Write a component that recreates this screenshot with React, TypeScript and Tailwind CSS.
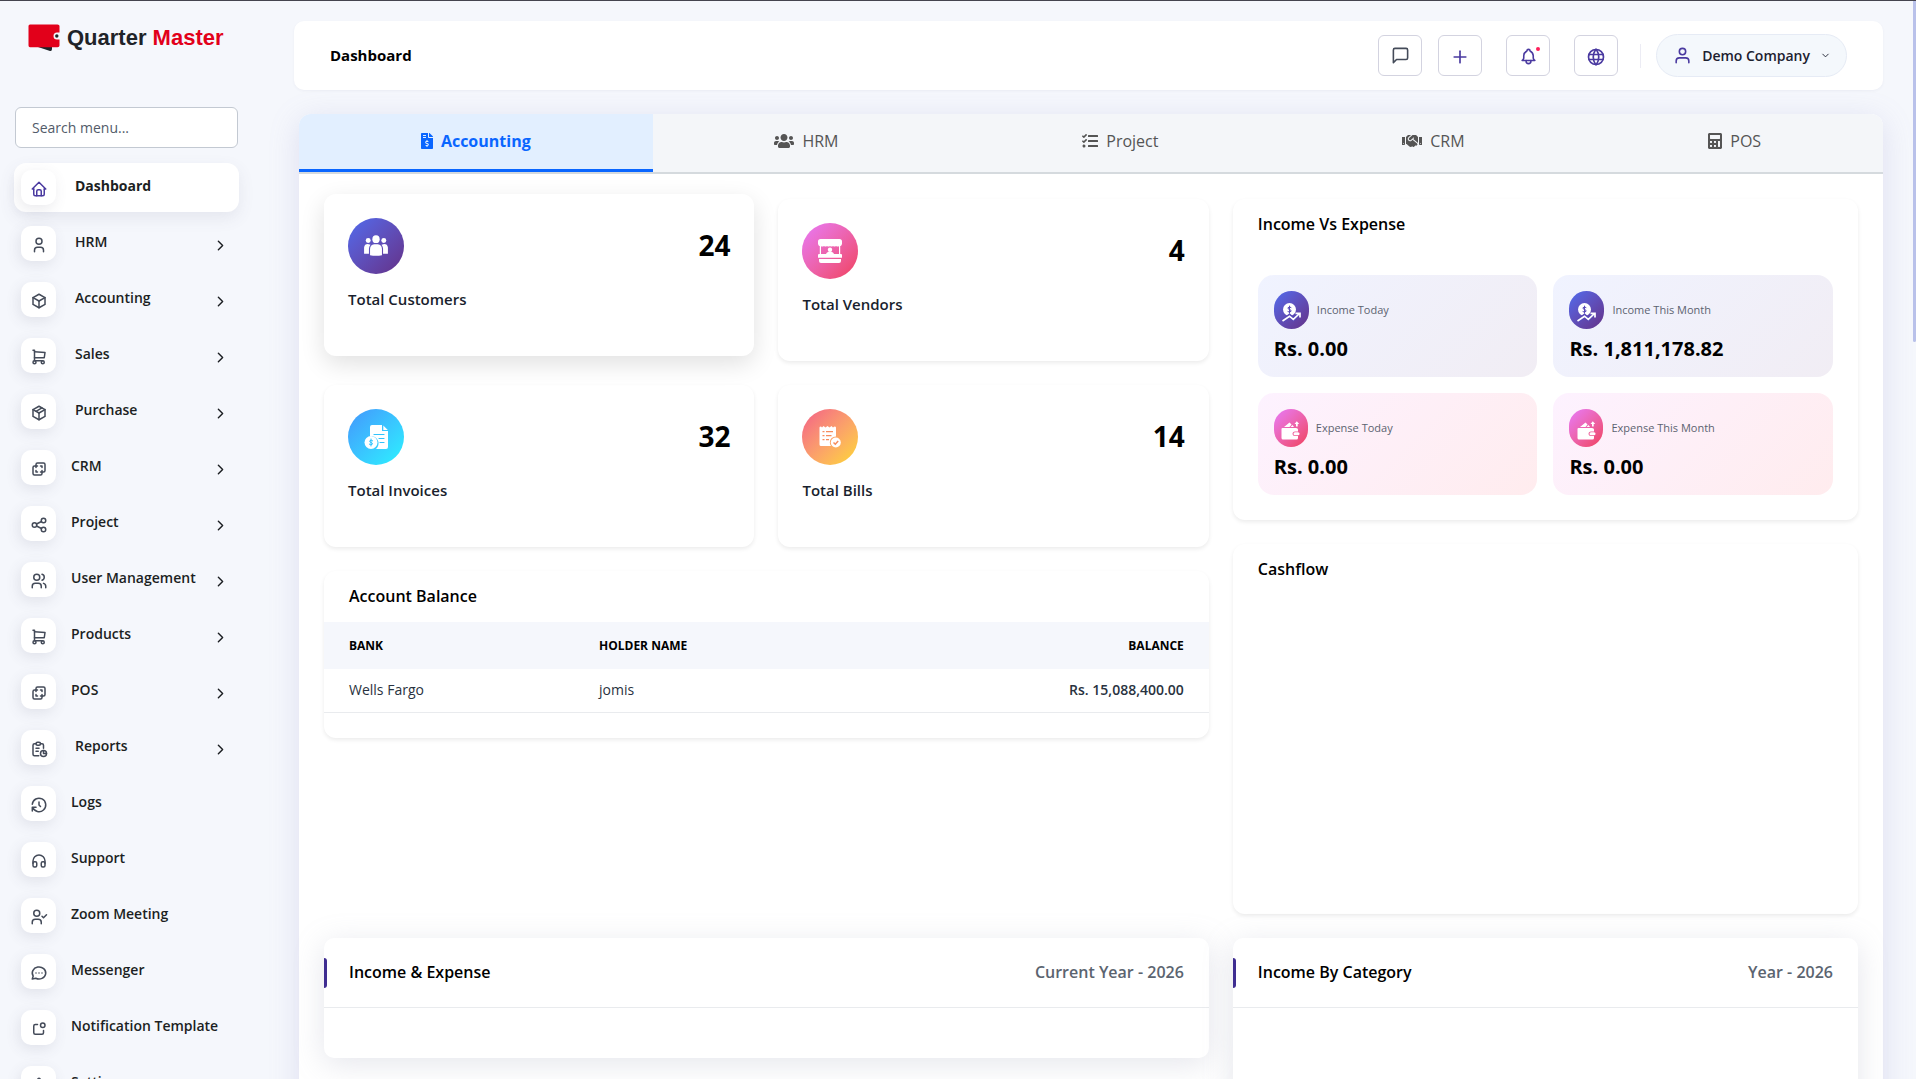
import type { ReactNode } from 'react';
import type { IconType } from 'react-icons';
import {
  TbHome, TbUser, TbBox, TbShoppingCart, TbPackage, TbLayersDifference, TbShare, TbUsers, TbReport,
  TbHistory, TbHeadphones, TbNotification, TbSettings, TbChevronRight, TbPlus, TbBell, TbWorld,
} from 'react-icons/tb';
import { FiMessageSquare, FiUser, FiChevronDown } from 'react-icons/fi';
import { FaUsers, FaTasks, FaHandshake, FaCalculator, FaFileInvoiceDollar } from 'react-icons/fa';

interface IconProps {
  size?: number | string;
}

function UserCheckIcon({ size = 18 }: IconProps) {
  return (
    <svg width={size} height={size} viewBox="0 0 24 24" fill="none" stroke="currentColor" strokeWidth="2" strokeLinecap="round" strokeLinejoin="round" aria-hidden="true">
      <circle cx="9" cy="7" r="4" />
      <path d="M3 21v-2a4 4 0 0 1 4-4h4a4 4 0 0 1 4 4v2" />
      <path d="M16 11l2 2l4-4" />
    </svg>
  );
}

function MessageDotsIcon({ size = 18 }: IconProps) {
  return (
    <svg width={size} height={size} viewBox="0 0 24 24" fill="none" stroke="currentColor" strokeWidth="2" strokeLinecap="round" strokeLinejoin="round" aria-hidden="true">
      <path d="M3 20l1.300-3.900a9 8 0 1 1 3.400 2.900l-4.700 1" />
      <path d="M12 12v.010M8 12v.010M16 12v.010" />
    </svg>
  );
}

interface MenuItem {
  label: string;
  icon: IconType | typeof UserCheckIcon;
  /** has a submenu */
  sub?: boolean;
  /** label sits a bit further right */
  indent?: boolean;
  active?: boolean;
}

const MENU: MenuItem[] = [
  { label: 'Dashboard', icon: TbHome, indent: true, active: true },
  { label: 'HRM', icon: TbUser, sub: true, indent: true },
  { label: 'Accounting', icon: TbBox, sub: true, indent: true },
  { label: 'Sales', icon: TbShoppingCart, sub: true, indent: true },
  { label: 'Purchase', icon: TbPackage, sub: true, indent: true },
  { label: 'CRM', icon: TbLayersDifference, sub: true },
  { label: 'Project', icon: TbShare, sub: true },
  { label: 'User Management', icon: TbUsers, sub: true },
  { label: 'Products', icon: TbShoppingCart, sub: true },
  { label: 'POS', icon: TbLayersDifference, sub: true },
  { label: 'Reports', icon: TbReport, sub: true, indent: true },
  { label: 'Logs', icon: TbHistory },
  { label: 'Support', icon: TbHeadphones },
  { label: 'Zoom Meeting', icon: UserCheckIcon },
  { label: 'Messenger', icon: MessageDotsIcon },
  { label: 'Notification Template', icon: TbNotification },
  { label: 'Settings', icon: TbSettings },
];

const TABS = [
  { label: 'Accounting', icon: FaFileInvoiceDollar, iconClass: 'h-4 w-3' },
  { label: 'HRM', icon: FaUsers, iconClass: 'h-4 w-5' },
  { label: 'Project', icon: FaTasks, iconClass: 'size-4' },
  { label: 'CRM', icon: FaHandshake, iconClass: 'h-4 w-5' },
  { label: 'POS', icon: FaCalculator, iconClass: 'h-4 w-3.5' },
];

function Logo() {
  return (
    <a href="#" className="flex items-center gap-[7px] font-['Liberation_Sans',sans-serif] text-[22px] leading-6 font-bold">
      <svg width="32" height="28" viewBox="0 0 32 28" aria-hidden="true">
        <path d="M7 22 L22 27 Q24 27.500 24 25 L24 22 Z" fill="#1f2328" />
        <path
          d="M2 0.500 H29.500 Q31.500 0.500 31.500 2 V8.500 H29 Q25.500 8.500 25.500 12 Q25.500 15.500 29 15.500 H31.500 V21.500 Q31.500 23.300 29.500 23.300 H2 Q0.500 23.300 0.500 21.500 V2 Q0.500 0.500 2 0.500 Z"
          fill="#e2001a"
        />
        <circle cx="28.800" cy="12" r="1.700" fill="#1f2328" />
      </svg>
      <span className="whitespace-nowrap text-[#1f2328]">
        Quarter <span className="text-[#e2001a]">Master</span>
      </span>
    </a>
  );
}

function Sidebar() {
  return (
    <aside className="w-[294px] flex-none pl-[15px]">
      <div className="flex h-[106px] items-start pt-[23px] pl-[13px]">
        <Logo />
      </div>
      <input
        type="text"
        aria-label="Search menu"
        placeholder="Search menu..."
        className="h-[41px] w-[223px] rounded-md border border-[#c3c9d2] bg-white px-4 text-sm text-[#1f2328] placeholder:text-[#525b69]"
      />
      <nav className="mt-[15px] -ml-px flex w-[225px] flex-col gap-[7px]">
        {MENU.map(({ label, icon: Icon, sub, indent, active }) => (
          <a
            key={label}
            href="#"
            className={`flex h-[49px] items-center rounded-xl pr-2.5 pl-[7px] text-sm text-[#1c1f23] ${
              active ? 'bg-white font-bold shadow-[0_6px_16px_rgba(90,90,120,0.1)]' : 'font-semibold'
            }`}
          >
            <span
              className={`flex size-[35px] flex-none items-center justify-center rounded-[10px] bg-white pt-[3px] shadow-[-2px_4px_14px_rgba(80,80,110,0.12)] ${
                active ? 'text-[#4a3aa0]' : 'text-[#444b59]'
              }`}
            >
              <Icon size={18} />
            </span>
            <span className={`flex-1 pb-1 whitespace-nowrap ${indent ? 'pl-[19px]' : 'pl-[15px]'}`}>{label}</span>
            {sub && <TbChevronRight size={17} className="mt-1" />}
          </a>
        ))}
      </nav>
    </aside>
  );
}

function HeaderButton({ label, children }: { label: string; children: ReactNode }) {
  return (
    <button
      type="button"
      aria-label={label}
      className="relative flex h-[41px] w-11 items-center justify-center rounded-md border border-[#d3d3e0] text-[#4a3aa0]"
    >
      {children}
    </button>
  );
}

function Header() {
  return (
    <header className="flex h-[69px] items-center justify-between rounded-[10px] bg-white px-9 shadow-[0_1px_3px_rgba(60,60,90,0.05)]">
      <h1 className="text-[15px] font-bold text-black">Dashboard</h1>
      <div className="flex items-center">
        <div className="flex items-center gap-6">
          <div className="flex gap-4">
            <HeaderButton label="Messages">
              <FiMessageSquare size={19} className="text-[#444b59]" />
            </HeaderButton>
            <HeaderButton label="Add">
              <TbPlus size={20} className="mt-0.5" />
            </HeaderButton>
          </div>
          <HeaderButton label="Notifications">
            <TbBell size={19} className="mt-0.5" />
            <span className="absolute top-[11px] right-[9px] size-1 rounded-full bg-[#ff1f5a]" />
          </HeaderButton>
          <HeaderButton label="Language">
            <TbWorld size={20} className="mt-0.5" />
          </HeaderButton>
        </div>
        <span className="mr-[15px] ml-[22px] h-6 w-px bg-[#ececf4]" />
        <button
          type="button"
          className="flex h-[43px] items-center gap-2.5 rounded-full border border-[#e6ebf5] bg-[#f4f8fc] pr-[15px] pl-4 text-sm font-semibold whitespace-nowrap text-[#1c2130]"
        >
          <FiUser size={19} className="text-[#4a3aa0]" />
          Demo Company
          <FiChevronDown size={11} />
        </button>
      </div>
    </header>
  );
}

function Tabs() {
  return (
    <div role="tablist" className="flex h-[60px] overflow-hidden rounded-t-xl border-b-2 border-[#d5dade] bg-[#f4f6f9] text-base">
      {TABS.map(({ label, icon: Icon, iconClass }, i) => (
        <button
          key={label}
          type="button"
          role="tab"
          aria-selected={i === 0}
          className={`flex flex-auto items-center justify-center gap-2 border-b-3 pb-0.5 ${
            i === 0 ? 'border-[#0a66ff] bg-[#e2efff] font-bold text-[#0a66ff]' : 'border-transparent text-[#555]'
          }`}
        >
          <Icon className={iconClass} />
          {label}
        </button>
      ))}
    </div>
  );
}

function CustomersIcon() {
  return (
    <svg width="24" height="22" viewBox="0 0 26 24" fill="currentColor" aria-hidden="true">
      <ellipse cx="13" cy="4.500" rx="4" ry="4.300" />
      <circle cx="4.500" cy="6" r="2.700" />
      <circle cx="21.500" cy="6" r="2.700" />
      <path d="M6.500 22 V15.500 Q6.500 10.500 11 10 H15 Q19.500 10.500 19.500 15.500 V22 Q13 23.500 6.500 22 Z" />
      <path d="M0 20.500 V13.500 Q0.500 9.800 4 9.800 L7 10.500 Q5.300 12.500 5.300 15 V20.500 Z M26 20.500 V13.500 Q25.500 9.800 22 9.800 L19 10.500 Q20.700 12.500 20.700 15 V20.500 Z" />
    </svg>
  );
}

function VendorsIcon() {
  return (
    <svg width="24" height="24" viewBox="0 0 24 24" fill="currentColor" aria-hidden="true">
      <path d="M2.500 0 H21.500 Q24 0 24 2.500 V5 Q23.500 7.500 21 7.200 Q19.500 8 18 7 Q16.500 8 15 7 Q13.500 8 12 7 Q10.500 8 9 7 Q7.500 8 6 7 Q4.500 8 3 7.200 Q0.500 7.500 0 5 V2.500 Q0 0 2.500 0 Z" />
      <path d="M1.800 6 H3 V16 H1.800 Z M21 6 H22.200 V16 H21 Z" />
      <circle cx="12" cy="10.800" r="2.200" />
      <path d="M8 15.500 Q8 13 12 12.500 Q16 13 16 15.500 Z" />
      <path d="M1 15 H23 Q24 15 24 16 V18.700 H0 V16 Q0 15 1 15 Z M1 20 H23 V22 Q23 24 21 24 H3 Q1 24 1 22 Z" />
    </svg>
  );
}

function InvoicesIcon() {
  return (
    <svg width="24" height="24" viewBox="0 0 24 24" fill="currentColor" aria-hidden="true">
      <path d="M8 0 H18 V6 H24 V22 Q24 24 22 24 H12 Q15 21 14.500 17 Q13 12 8 11 L6 11 V2 Q6 0 8 0 Z M19.300 0.500 L23.800 5 H19.300 Z" />
      <circle cx="7" cy="17.500" r="6.500" />
      <g fill="none" stroke="#2fc3fd" strokeWidth="1.200" strokeLinecap="round">
        <path d="M10 9.500 H20 M15 13.500 H20 M16 17.500 H20" />
        <path d="M8.700 15.800 Q7 14.500 5.800 15.800 Q5.400 17.100 7 17.500 Q8.900 17.900 8.300 19.200 Q7 20.500 5.300 19.200 M7 14 V21" strokeWidth="1" />
      </g>
    </svg>
  );
}

function BillsIcon() {
  return (
    <svg width="24" height="24" viewBox="0 0 24 24" fill="currentColor" aria-hidden="true">
      <path d="M1.500 2.500 Q1.500 1.500 3 1.500 L4 2.500 L5.500 1 L7.500 2.500 L9.500 1 L11.500 2.500 L13.500 1 L15 2.500 L16.500 1.500 Q18 1.500 18 2.500 V11.500 Q12 12 11.800 17.500 Q12 19.500 13 21 H3 Q1.500 21 1.500 19.500 Z" />
      <circle cx="17.800" cy="17.500" r="5" />
      <g fill="none" stroke="#f68c5d" strokeWidth="1.200">
        <path d="M4.500 6.700 H6.500 M8 6.700 H15 M4.500 10.700 H6.500 M8 10.700 H13.500 M4.500 14.700 H6.500 M8 14.700 H11" />
        <path d="M15.500 17.500 L17.300 19.200 L20.200 16" strokeWidth="1.500" />
      </g>
    </svg>
  );
}

function IncomeIcon() {
  return (
    <svg width="19" height="19" viewBox="0 0 19 19" fill="none" stroke="currentColor" strokeWidth="1.700" aria-hidden="true">
      <circle cx="7.500" cy="6.500" r="6.500" fill="currentColor" stroke="none" />
      <path d="M0.700 18 L7.500 12.800 L11.300 16 L16.500 11" stroke="#5849b8" strokeWidth="4" />
      <path d="M0.500 18 L7.500 13.200 L11.300 16.300 L17 11 M13.500 10.300 H18 V14.500" />
      <path d="M9.300 4.700 Q7.500 3.300 6 4.700 Q5.700 6.200 7.500 6.500 Q9.600 6.900 9 8.400 Q7.300 9.700 5.600 8.400 M7.500 2.700 V10.500" stroke="#5849b8" strokeWidth="1" />
    </svg>
  );
}

function ExpenseIcon() {
  return (
    <svg width="19" height="19" viewBox="0 0 19 19" fill="currentColor" aria-hidden="true">
      <path d="M1.500 7 H15 Q17 7 17 8.500 V10.500 H14 Q11.500 10.500 11.500 13 Q11.500 15 14 15 H17 V17 Q17 18.500 15.500 18.500 H2 Q0.500 18.500 0.500 17 V8 Q0.500 7 1.500 7 Z" />
      <path d="M3 6 L8.500 1.500 L10.500 3.500 L8.500 6 Z M9.500 6 L11.500 4 L13 6 Z M15 5.500 V3 H13.500 L15.800 0.300 L18.200 3 H16.700 V5.500 Z" />
      <rect x="12.500" y="11.300" width="6" height="3" rx="1.500" />
    </svg>
  );
}

interface StatCardProps {
  label: string;
  value: number;
  gradient: string;
  /** lifted, as under the pointer */
  raised?: boolean;
  children: ReactNode;
}

function StatCard({ label, value, gradient, raised, children }: StatCardProps) {
  return (
    <div
      className={`h-[162px] rounded-xl bg-white px-6 pt-6 ${
        raised ? '-translate-y-[5px] shadow-[0_8px_25px_rgba(0,0,0,0.12)]' : 'shadow-[0_2px_4px_rgba(0,0,0,0.08)]'
      }`}
    >
      <div className="flex items-center justify-between">
        <span className={`flex size-14 items-center justify-center rounded-full text-white ${gradient}`}>{children}</span>
        <span className="pb-0.5 text-[28px] leading-8 font-bold text-black">{value}</span>
      </div>
      <p className="mt-[13px] text-[15px] leading-6 font-semibold text-[#1a1f2e]">{label}</p>
    </div>
  );
}

function AmountBox({ label, value, expense }: { label: string; value: string; expense?: boolean }) {
  return (
    <div
      className={`h-[102px] rounded-2xl bg-linear-135 px-4 pt-4 ${
        expense ? 'from-[#fdf2ff] to-[#ffecee]' : 'from-[#f0f3ff] to-[#f1edf4]'
      }`}
    >
      <div className="flex items-center gap-2">
        <span
          className={`flex h-[38px] flex-none items-center justify-center rounded-full bg-linear-135 pt-1 text-white ${
            expense ? 'w-[34px] from-[#e879f9] to-[#f03e5c]' : 'w-[35px] from-[#4f6bee] to-[#633088]'
          }`}
        >
          {expense ? <ExpenseIcon /> : <IncomeIcon />}
        </span>
        <span className="text-[11px] text-[#5c6370]">{label}</span>
      </div>
      <p className="mt-2 text-xl leading-6 font-bold text-black">{value}</p>
    </div>
  );
}

function AccountBalance() {
  return (
    <section className="overflow-hidden rounded-xl bg-white pb-[25px] shadow-[0_2px_4px_rgba(0,0,0,0.08)]">
      <h2 className="px-[25px] pt-[13px] pb-[14px] text-base leading-6 font-semibold text-black">Account Balance</h2>
      <table className="w-full text-sm text-[#293240]">
        <thead className="bg-[#f5f7fc] text-xs text-black uppercase">
          <tr className="h-[47px]">
            <th className="w-[250px] pl-[25px] text-left">Bank</th>
            <th className="pl-[25px] text-left">Holder Name</th>
            <th className="pr-[25px] text-right">Balance</th>
          </tr>
        </thead>
        <tbody>
          <tr className="h-[43px] border-b border-[#e9ebee]">
            <td className="pl-[25px]">Wells Fargo</td>
            <td className="pl-[25px]">jomis</td>
            <td className="pr-[25px] text-right font-semibold">Rs. 15,088,400.00</td>
          </tr>
        </tbody>
      </table>
    </section>
  );
}

function ChartCard({ title, period, className }: { title: string; period: string; className: string }) {
  return (
    <section className={`rounded-[10px] bg-white shadow-[0_6px_30px_rgba(150,155,180,0.25)] ${className}`}>
      <div className="flex h-[70px] items-center justify-between border-b border-[#e9ebee] pr-[25px] text-base">
        <div className="flex items-center">
          <span className="h-[30px] w-[3px] rounded-r-sm bg-[#3f2d91]" />
          <h2 className="pb-0.5 pl-[22px] font-semibold text-black">{title}</h2>
        </div>
        <span className="pb-0.5 font-semibold text-[#5b6470]">{period}</span>
      </div>
    </section>
  );
}

export default function App() {
  return (
    <div className="relative flex h-screen overflow-hidden border-t border-[#45444f] bg-[#f5f7fc] font-['Open_Sans',sans-serif]">
      <Sidebar />
      <main className="min-w-0 flex-1 pt-5 pr-[33px]">
        <Header />
        <div className="mt-6 ml-[5px] rounded-t-xl bg-white shadow-[0_6px_30px_rgba(140,140,200,0.22)]">
          <Tabs />
          <div className="grid grid-cols-12 gap-6 px-[25px] pt-[25px] pb-12">
            <div className="col-span-7 flex flex-col gap-6">
              <div className="grid grid-cols-2 gap-6">
                <StatCard label="Total Customers" value={24} gradient="bg-linear-135 from-[#4f6bee] to-[#633088]" raised>
                  <CustomersIcon />
                </StatCard>
                <StatCard label="Total Vendors" value={4} gradient="bg-linear-135 from-[#e879f9] to-[#f03e5c]">
                  <VendorsIcon />
                </StatCard>
                <StatCard label="Total Invoices" value={32} gradient="bg-linear-135 from-[#4396fc] to-[#2bf2ff]">
                  <InvoicesIcon />
                </StatCard>
                <StatCard label="Total Bills" value={14} gradient="bg-linear-135 from-[#f25c86] to-[#fdd822]">
                  <BillsIcon />
                </StatCard>
              </div>
              <AccountBalance />
            </div>

            <div className="col-span-5 flex flex-col gap-6">
              <section className="rounded-xl bg-white px-[25px] pb-[25px] shadow-[0_2px_4px_rgba(0,0,0,0.08)]">
                <h2 className="pt-[13px] text-base leading-6 font-semibold text-black">Income Vs Expense</h2>
                <div className="mt-[39px] grid grid-cols-2 gap-4">
                  <AmountBox label="Income Today" value="Rs. 0.00" />
                  <AmountBox label="Income This Month" value="Rs. 1,811,178.82" />
                  <AmountBox label="Expense Today" value="Rs. 0.00" expense />
                  <AmountBox label="Expense This Month" value="Rs. 0.00" expense />
                </div>
              </section>
              <section className="h-[370px] rounded-xl bg-white px-[25px] shadow-[0_2px_4px_rgba(0,0,0,0.08)]">
                <h2 className="pt-[13px] text-base leading-6 font-semibold text-black">Cashflow</h2>
              </section>
            </div>

            <ChartCard title="Income & Expense" period="Current Year - 2026" className="col-span-7 h-[120px]" />
            <ChartCard title="Income By Category" period="Year - 2026" className="col-span-5 h-[420px]" />
          </div>
        </div>
      </main>
      {/* scroll thumb */}
      <span className="absolute top-0 right-0 h-[341px] w-[3px] rounded-b-sm bg-[#b9c1ea]" />
    </div>
  );
}
